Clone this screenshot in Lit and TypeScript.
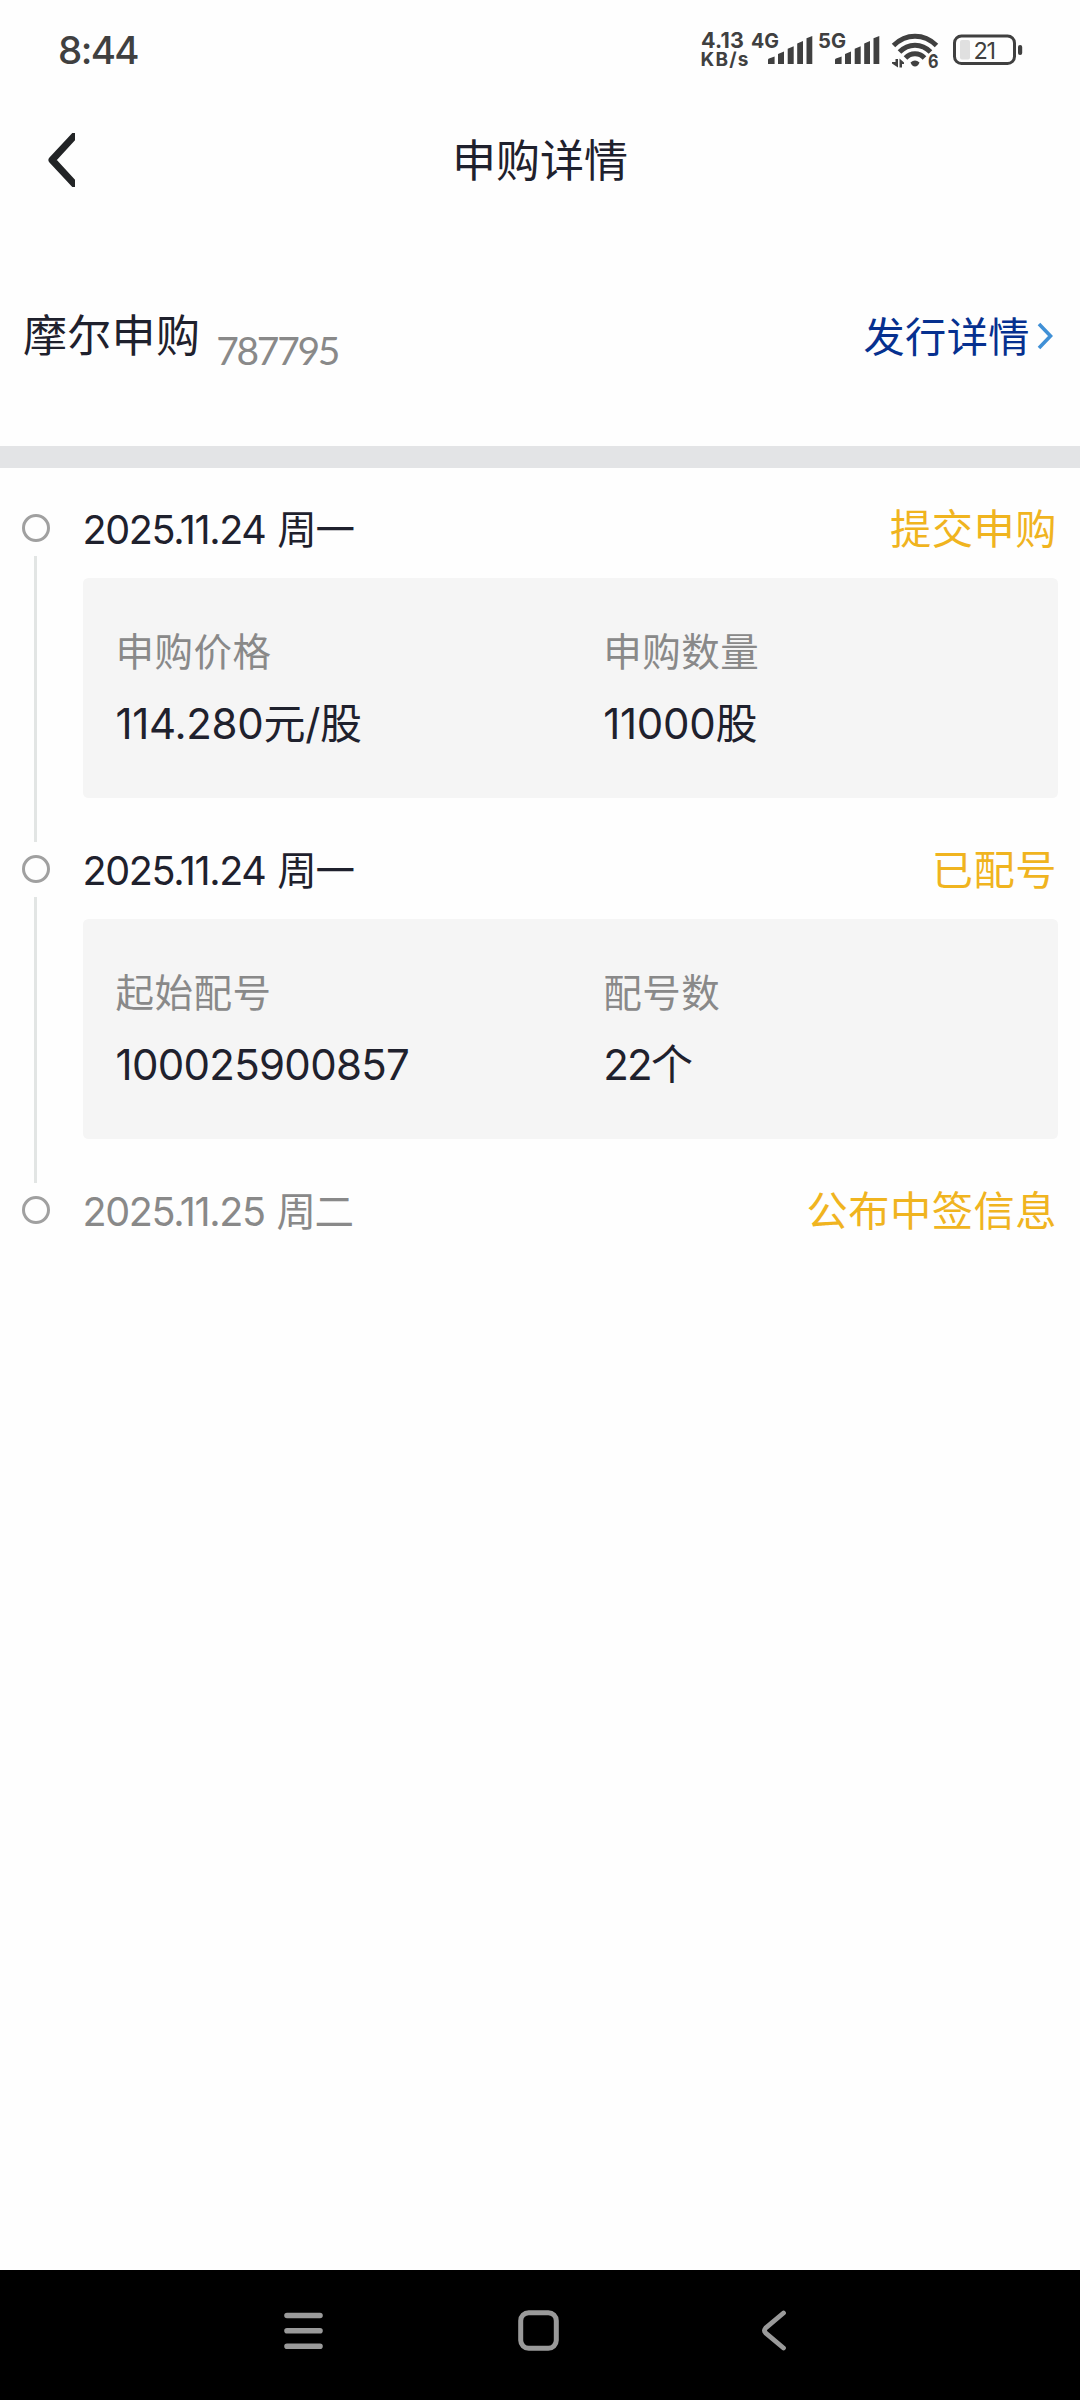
import { LitElement, html, css, svg, nothing } from "lit";
import { customElement, property } from "lit/decorators.js";

interface Field {
  label: string;
  value: string;
  kind: string;
}

interface Step {
  date: string;
  status: string;
  muted?: boolean;
  fields?: Field[];
}

const STEPS: Step[] = [
  {
    date: "2025.11.24 周一",
    status: "提交申购",
    fields: [
      { label: "申购价格", value: "114.280元/股", kind: "price" },
      { label: "申购数量", value: "11000股", kind: "price" },
    ],
  },
  {
    date: "2025.11.24 周一",
    status: "已配号",
    fields: [
      { label: "起始配号", value: "100025900857", kind: "number" },
      { label: "配号数", value: "22个", kind: "count" },
    ],
  },
  { date: "2025.11.25 周二", status: "公布中签信息", muted: true },
];

const signalBars = (x: number) => svg`
  <path transform="translate(${x} 0)" d="M0 64V60Q0 59 1 58.6L6.6 56.6V64Z M10 64V54L16 51.6V64Z M19.7 64V48.7L25.7 46.2V64Z M29.2 64V43.4L35 41V64Z M38.5 64V38.2L44.3 36V64Z"/>`;

@customElement("status-bar")
export class StatusBar extends LitElement {
  static styles = css`
    :host {
      display: flex;
      justify-content: space-between;
      height: 100px;
      color: #404040;
      font-family: Inter, "Noto Sans", sans-serif;
    }
    .time {
      padding-left: 58px;
      font-size: 38.5px;
      line-height: 100px;
      font-weight: 500;
      letter-spacing: -1.6px;
    }
    .icons {
      display: block;
      fill: #404040;
      font-weight: 700;
    }
    .stroke {
      fill: none;
      stroke: #404040;
    }
    .level {
      fill: #e0e0e0;
    }
    .charge {
      font-weight: 400;
    }
  `;

  render() {
    return html`
      <span class="time">8:44</span>
      <svg class="icons" width="380" height="100" viewBox="700 0 380 100">
        <text x="701" y="47.500" font-size="21.5" textLength="43">4.13</text>
        <text x="700.5" y="66" font-size="19" textLength="48">KB/s</text>
        <text x="751" y="48" font-size="20" textLength="28" lengthAdjust="spacingAndGlyphs">4G</text>
        ${signalBars(768)}
        <text x="818" y="48" font-size="20" textLength="28" lengthAdjust="spacingAndGlyphs">5G</text>
        ${signalBars(835)}
        <g class="stroke" stroke-width="5">
          <path d="M893.5 45.5Q903 36.3 915 36.3T936.500 45.500" />
          <path d="M899.500 52Q906 45.200 915 45.200T930.500 52" />
          <path d="M905.500 58Q909.500 53.800 915 53.800T924.500 58" />
        </g>
        <path d="M910.500 62.500Q915 58.500 919.500 62.500Q918 66.500 915 66.500T910.500 62.500Z" />
        <path d="M895.500 59H898V67.500L892 63.500V62H895.500ZM899.500 67.500V58.500L904 62.500V64H902V67.500Z" />
        <text x="928" y="68" font-size="18.500" textLength="10.500" lengthAdjust="spacingAndGlyphs">6</text>
        <rect class="stroke" x="954.500" y="36" width="60" height="27.500" rx="7" stroke-width="3" />
        <rect class="level" x="960" y="40" width="10" height="19.500" rx="2" />
        <rect x="1018" y="45" width="4.200" height="10" rx="2" />
        <text class="charge" x="973.500" y="59" font-size="23.500" textLength="22.500">21</text>
      </svg>
    `;
  }
}

@customElement("step-item")
export class StepItem extends LitElement {
  @property({ attribute: false }) step!: Step;
  @property({ type: Boolean }) last = false;

  static styles = css`
    :host {
      display: grid;
      grid-template-columns: 60.5px 1fr;
      height: 341px;
    }
    .rail {
      display: flex;
      flex-direction: column;
      gap: 14px;
      padding-top: 16px;
      align-items: center;
      width: 27px;
    }
    .ring {
      box-sizing: border-box;
      width: 28px;
      height: 28px;
      flex: none;
      border: 3px solid #a0a0a0;
      border-radius: 50%;
    }
    .line {
      width: 3px;
      height: 286px;
      background: #e2e5e4;
    }
    .head {
      display: flex;
      justify-content: space-between;
      height: 60px;
      line-height: 63px;
      padding-right: 1px;
    }
    .date {
      font-size: 39.5px;
      line-height: 65px;
      letter-spacing: -1.35px;
      word-spacing: 2px;
      color: #1f212d;
      white-space: pre;
    }
    .muted {
      color: #898989;
    }
    .status {
      font-size: 41.25px;
      letter-spacing: 0.5px;
      color: #f0b41f;
    }
    .card {
      display: grid;
      grid-template-columns: 1fr 1fr;
      margin-top: 20px;
      height: 220px;
      border-radius: 5.5px;
      background: #f5f5f5;
    }
    .field {
      padding: 46px 0 0 33px;
    }
    .label {
      height: 56px;
      line-height: 57px;
      font-size: 38.5px;
      letter-spacing: 0.5px;
      color: #898989;
    }
    .value {
      margin-top: 13px;
      height: 60px;
      line-height: 62px;
      font-size: 42px;
      color: #1f212d;
    }
    .price {
      letter-spacing: -0.3px;
    }
    .number {
      letter-spacing: -0.7px;
    }
    .count {
      letter-spacing: -1.8px;
    }
  `;

  render() {
    const { date, status, muted, fields } = this.step;
    return html`
      <div class="rail">
        <span class="ring"></span>
        ${this.last ? nothing : html`<span class="line"></span>`}
      </div>
      <div>
        <div class="head">
          <span class="date ${muted ? "muted" : ""}">${date}</span>
          <span class="status">${status}</span>
        </div>
        ${fields
          ? html`<div class="card">
              ${fields.map(
                (f) => html`<div class="field">
                  <div class="label">${f.label}</div>
                  <div class="value ${f.kind}">${f.value}</div>
                </div>`
              )}
            </div>`
          : nothing}
      </div>
    `;
  }
}

@customElement("app-root")
export class AppRoot extends LitElement {
  static styles = css`
    :host {
      display: flex;
      flex-direction: column;
      height: 2400px;
      background: #fefefe;
      font-family: Inter, "Noto Sans CJK SC", sans-serif;
      color: #1f212d;
    }
    .bar {
      display: grid;
      grid-template-columns: 1fr auto 1fr;
      align-items: center;
      height: 120px;
      padding: 0 48px;
    }
    .title {
      padding-top: 1px;
      font-size: 44px;
      line-height: 60px;
    }
    svg {
      display: block;
      fill: none;
    }
    .stock {
      display: flex;
      justify-content: space-between;
      height: 226px;
      padding: 0 27px 0 23px;
      border-bottom: 22px solid #e3e4e6;
    }
    .name {
      font-size: 44px;
      line-height: 232px;
      letter-spacing: 0.3px;
    }
    .code {
      margin-left: 16px;
      font-family: Lato, "Noto Sans", sans-serif;
      font-size: 39px;
      line-height: 260px;
      letter-spacing: -2.3px;
      color: #898989;
    }
    .left,
    .link {
      display: flex;
    }
    .link {
      align-items: center;
      height: 232px;
      gap: 7px;
      font-size: 41.25px;
      letter-spacing: 0.4px;
      color: #06308f;
    }
    .link span {
      padding-bottom: 4px;
    }
    .steps {
      flex: 1;
      padding: 30px 22px 0;
    }
    .nav {
      display: flex;
      justify-content: space-between;
      align-items: center;
      height: 130px;
      box-sizing: border-box;
      padding: 0 293px 9px 284px;
      background: #000;
    }
    .nav svg {
      stroke: #9a9a9a;
      stroke-linecap: round;
      stroke-linejoin: round;
    }
    .home {
      margin-right: 7px;
    }
  `;

  render() {
    return html`
      <status-bar></status-bar>
      <header class="bar">
        <svg width="27" height="54" viewBox="0 0 27 54">
          <path d="M30 -1L4 27L30 55" stroke="#222426" stroke-width="7" stroke-linejoin="round" />
        </svg>
        <span class="title">申购详情</span>
      </header>
      <section class="stock">
        <div class="left">
          <span class="name">摩尔申购</span>
          <span class="code">787795</span>
        </div>
        <div class="link">
          <span>发行详情</span>
          <svg width="16" height="28" viewBox="0 0 16 28">
            <path d="M2 2L13.500 14L2 26" stroke="#4090d6" stroke-width="3.600" />
          </svg>
        </div>
      </section>
      <main class="steps">
        ${STEPS.map(
          (s, i) => html`<step-item .step=${s} ?last=${i === STEPS.length - 1}></step-item>`
        )}
      </main>
      <footer class="nav">
        <svg width="39" height="41" viewBox="0 0 39 41">
          <path d="M3 5.500H36M3 20.800H36M3 36.200H36" stroke-width="5.600" />
        </svg>
        <svg class="home" width="41" height="41" viewBox="0 0 41 41">
          <rect x="2.700" y="2.700" width="35.600" height="35.600" rx="8" stroke-width="5" />
        </svg>
        <svg width="26" height="41" viewBox="0 0 26 41">
          <path d="M22.500 3L4.500 18.200Q2.500 20.500 4.500 22.800L22.500 38" stroke-width="4.800" />
        </svg>
      </footer>
    `;
  }
}
